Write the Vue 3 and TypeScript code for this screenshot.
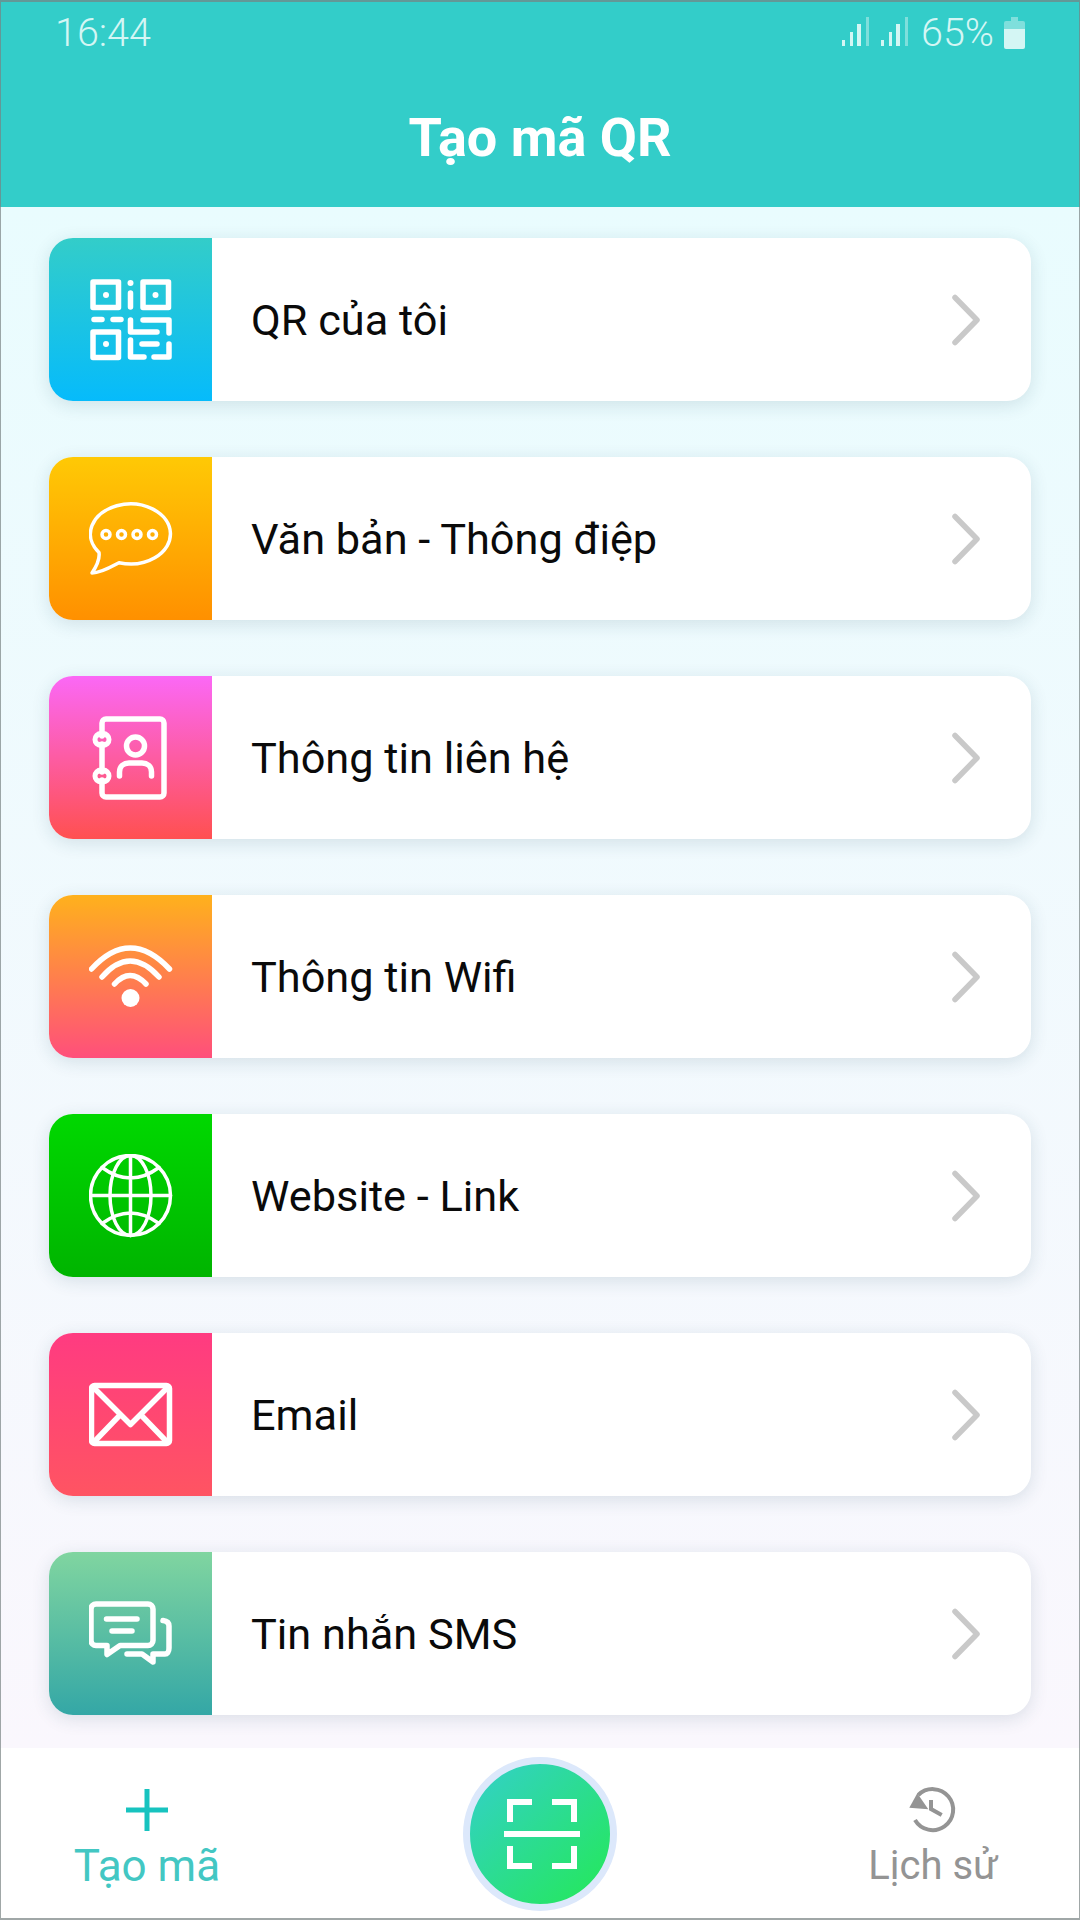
<template>
  <div class="screen">
    <header class="top">
      <div class="status">
        <span class="clock">16:44</span>
        <div class="status-right">
          <svg class="signal" width="28" height="30" viewBox="0 0 28 30" v-for="n in 2" :key="n">
            <rect x="0" y="23" width="3" height="6" fill="#d4f6f4" />
            <rect x="8" y="15" width="3" height="14" fill="#d4f6f4" />
            <rect x="15" y="7" width="4" height="22" fill="#d4f6f4" />
            <rect x="24" y="0" width="3" height="29" fill="#7fdfdc" />
          </svg>
          <span class="percent">65%</span>
          <svg class="battery" width="21" height="32" viewBox="0 0 21 32">
            <path d="M7 0h7v4h5a2 2 0 0 1 2 2v7H0V6a2 2 0 0 1 2-2h5z" fill="#7fdfdc" />
            <path d="M0 12h21v18a2 2 0 0 1-2 2H2a2 2 0 0 1-2-2z" fill="#d4f6f4" />
          </svg>
        </div>
      </div>
      <h1 class="title">Tạo mã QR</h1>
    </header>

    <main class="list">
      <div class="card" v-for="row in rows" :key="row.id">
        <div class="card-icon" :class="`grad-${row.id}`">
          <svg v-if="row.id === 'qr'" class="ico thick" viewBox="0 0 84 84">
            <rect x="4" y="4" width="25.500" height="25.500" />
            <rect x="54" y="4" width="25.500" height="25.500" />
            <rect x="4" y="54" width="25.500" height="25.500" />
            <circle class="solid" cx="17" cy="17" r="3" />
            <circle class="solid" cx="66.500" cy="17" r="3" />
            <circle class="solid" cx="17" cy="66" r="3" />
            <circle class="solid" cx="41.500" cy="5" r="3" />
            <path d="M41.500 15v14M5 41.500h8M24 41.500h8" />
            <path d="M41.500 42v12H68M54 42h26v13M53 66h15M41.500 62v17H55M65 79h15V66" />
          </svg>

          <svg v-else-if="row.id === 'text'" class="ico thin" viewBox="0 0 84 84">
            <path d="M10 55.500A40 30 0 1 1 30 65.700C22 70 12 76 3 76c4-6 8-14 7-20.500z" />
            <circle cx="17" cy="37.500" r="4" />
            <circle cx="32.500" cy="37.500" r="4" />
            <circle cx="48" cy="37.500" r="4" />
            <circle cx="63.500" cy="37.500" r="4" />
          </svg>

          <svg v-else-if="row.id === 'contact'" class="ico thick" viewBox="0 0 84 84">
            <path d="M13 20V7a4 4 0 0 1 4-4h54a4 4 0 0 1 4 4v70a4 4 0 0 1-4 4H17a4 4 0 0 1-4-4V64M13 28v28" />
            <path class="solid" fill-rule="evenodd" d="M12 15h2a8.500 8.500 0 0 1 0 17h-2a8.500 8.500 0 0 1 0-17zM11 21a2.500 2.500 0 0 0 0 5h4a2.500 2.500 0 0 0 0-5z" />
            <path class="solid" fill-rule="evenodd" d="M12 51.500h2a8.500 8.500 0 0 1 0 17h-2a8.500 8.500 0 0 1 0-17zM11 57.500a2.500 2.500 0 0 0 0 5h4a2.500 2.500 0 0 0 0-5z" />
            <circle cx="46.500" cy="30" r="9" />
            <path d="M30.500 60v-4c0-6 4.500-9 9.500-9h13c5 0 9.500 3 9.500 9v4" />
          </svg>

          <svg v-else-if="row.id === 'wifi'" class="ico thick" viewBox="0 0 84 84">
            <path d="M2.500 34Q41-8 80.500 34M13 42Q41 10 70 42M25.500 49Q41 32 57 49" />
            <circle class="solid" cx="41.500" cy="63" r="9" />
          </svg>

          <svg v-else-if="row.id === 'web'" class="ico thin" viewBox="0 0 84 84">
            <circle cx="41.500" cy="41.500" r="40" />
            <ellipse cx="41.500" cy="41.500" rx="20.500" ry="40" />
            <path d="M41.500 1.500v80M1.500 41.500h80M13 13.500q28.500 21 57 0M13 69.500q28.500-21 57 0" />
          </svg>

          <svg v-else-if="row.id === 'mail'" class="ico thick" viewBox="0 0 84 84">
            <rect x="2.500" y="12.500" width="78" height="58" rx="3" />
            <path d="M4 14l37.500 37.500L79 14M5 69l26-27M78 69L52 42" />
          </svg>

          <svg v-else class="ico thick" viewBox="0 0 84 84">
            <path d="M18 53.500H7a5 5 0 0 1-5-5V17a5 5 0 0 1 5-5h52a5 5 0 0 1 5 5v31.500a5 5 0 0 1-5 5H31L18 62.500z" />
            <path d="M17.500 27H48M23 39h20" />
            <path d="M74 28.500c4 .5 6 2.500 6 5.500v22c0 4-2 6-4 6H64v8l-11-8H38" />
          </svg>
        </div>
        <span class="card-label">{{ row.label }}</span>
        <svg class="chevron" width="34" height="56" viewBox="0 0 34 56">
          <path d="M8 5.500L30 28 8 50.500" />
        </svg>
      </div>
    </main>

    <nav class="bottom">
      <div class="tab active">
        <svg class="tab-icon" width="42" height="42" viewBox="0 0 42 42">
          <path d="M0 21h42M21 0v42" />
        </svg>
        <span>Tạo mã</span>
      </div>
      <div class="scan-wrap">
        <div class="scan">
          <svg width="76" height="70" viewBox="0 0 76 70">
            <path d="M28 3H6v20M48 3h22v20M28 67H6V47M48 67h22V47" />
            <path d="M0 35h76" />
          </svg>
        </div>
      </div>
      <div class="tab">
        <svg class="tab-icon history" width="50" height="50" viewBox="0 0 50 50">
          <path d="M10.300 11A20.500 20.500 0 1 1 7 36" />
          <path class="arrow" d="M9.300 9.300L1.300 23.700l19 1.600z" />
          <path d="M23 16v9l10.700 6" />
        </svg>
        <span>Lịch sử</span>
      </div>
    </nav>
  </div>
</template>

<script setup lang="ts">
interface Row {
  id: string;
  label: string;
}

const rows: Row[] = [
  { id: 'qr', label: 'QR của tôi' },
  { id: 'text', label: 'Văn bản - Thông điệp' },
  { id: 'contact', label: 'Thông tin liên hệ' },
  { id: 'wifi', label: 'Thông tin Wifi' },
  { id: 'web', label: 'Website - Link' },
  { id: 'mail', label: 'Email' },
  { id: 'sms', label: 'Tin nhắn SMS' },
];
</script>

<style scoped>
.screen {
  position: relative;
  width: 1080px;
  height: 1920px;
  display: flex;
  flex-direction: column;
  overflow: hidden;
  font-family: Roboto, "Noto Sans", sans-serif;
}

/* thin frame of the screenshot */
.screen::after {
  content: '';
  position: absolute;
  inset: 0;
  border: 1px solid rgba(120, 130, 130, 0.7);
  border-top-width: 2px;
  border-bottom-width: 2px;
  pointer-events: none;
}

.top {
  height: 207px;
  flex-shrink: 0;
  background: #33cdc9;
  display: flex;
  flex-direction: column;
}

.status {
  height: 66px;
  padding: 0 55px 0 55px;
  display: flex;
  justify-content: space-between;
  align-items: center;
  color: #d4f6f4;
}

.clock,
.percent {
  font-size: 39.500px;
  font-weight: 300;
  line-height: 66px;
}

.status-right {
  display: flex;
  align-items: center;
}

.signal {
  margin-right: 11px;
  margin-top: -3px;
}

.percent {
  margin-left: 1px;
}

.battery {
  margin-left: 10px;
}

.title {
  margin: 0;
  flex: 1;
  text-align: center;
  font-size: 54px;
  font-weight: 700;
  line-height: 68px;
  color: #fff;
  padding-top: 38px;
}

.list {
  flex: 1;
  padding: 31px 49px 0;
  display: flex;
  flex-direction: column;
  gap: 56px;
  background: linear-gradient(180deg, #e9fcfe 0%, #faf7fd 100%);
}

.card {
  height: 163px;
  flex-shrink: 0;
  display: flex;
  align-items: center;
  background: #fff;
  border-radius: 24px;
  box-shadow: 0 4px 18px rgba(30, 70, 90, 0.14);
}

.card-icon {
  width: 163px;
  height: 163px;
  flex-shrink: 0;
  display: flex;
  align-items: center;
  justify-content: center;
  border-radius: 24px 0 0 24px;
}

.grad-qr { background: linear-gradient(180deg, #33cdc9, #06bbfb); }
.grad-text { background: linear-gradient(180deg, #ffc905, #ff9000); }
.grad-contact { background: linear-gradient(180deg, #fb68f6, #ff5050); }
.grad-wifi { background: linear-gradient(180deg, #ffb11c, #ff4f7b); }
.grad-web { background: linear-gradient(180deg, #00d800, #00b400); }
.grad-mail { background: linear-gradient(180deg, #ff3b81, #ff5462); }
.grad-sms { background: linear-gradient(180deg, #80d5a0, #34a7a6); }

.ico {
  width: 84px;
  height: 84px;
  fill: none;
  stroke: #fff;
  stroke-linecap: round;
  stroke-linejoin: round;
}

.ico.thick { stroke-width: 5.5; }
.ico.thin { stroke-width: 3.5; }

.ico .solid {
  fill: #fff;
  stroke: none;
}

.card-label {
  flex: 1;
  padding: 2px 0 0 39px;
  font-size: 43.300px;
  color: #0a0a0a;
  white-space: nowrap;
}

.chevron {
  margin-right: 50px;
  fill: none;
  stroke: #c9c9c9;
  stroke-width: 5.5;
  stroke-linecap: round;
  stroke-linejoin: round;
}

.bottom {
  height: 172px;
  flex-shrink: 0;
  display: grid;
  grid-template-columns: 294px 1fr 294px;
  background: #fff;
}

.tab {
  display: flex;
  flex-direction: column;
  align-items: center;
  padding-top: 41px;
  font-size: 40px;
  line-height: 50px;
  color: #949494;
}

.tab.active {
  font-size: 44px;
  color: #43c7c3;
}

.tab-icon {
  fill: none;
  stroke: #17c3bf;
  stroke-width: 5;
  margin-bottom: 10px;
}

.tab-icon.history {
  stroke: #949494;
  stroke-width: 4;
  margin-top: -5px;
  margin-bottom: 7px;
}

.history .arrow {
  fill: #949494;
  stroke: none;
}

.scan-wrap {
  display: flex;
  justify-content: center;
  padding-top: 9px;
}

.scan {
  width: 154px;
  height: 154px;
  box-sizing: border-box;
  border: 7px solid #dce8fb;
  border-radius: 50%;
  background: linear-gradient(135deg, #34cfd0 0%, #23ea50 100%);
  background-origin: border-box;
  display: flex;
  align-items: center;
  justify-content: center;
}

.scan svg {
  margin-left: 3px;
  fill: none;
  stroke: #fff;
  stroke-width: 6;
}
</style>
